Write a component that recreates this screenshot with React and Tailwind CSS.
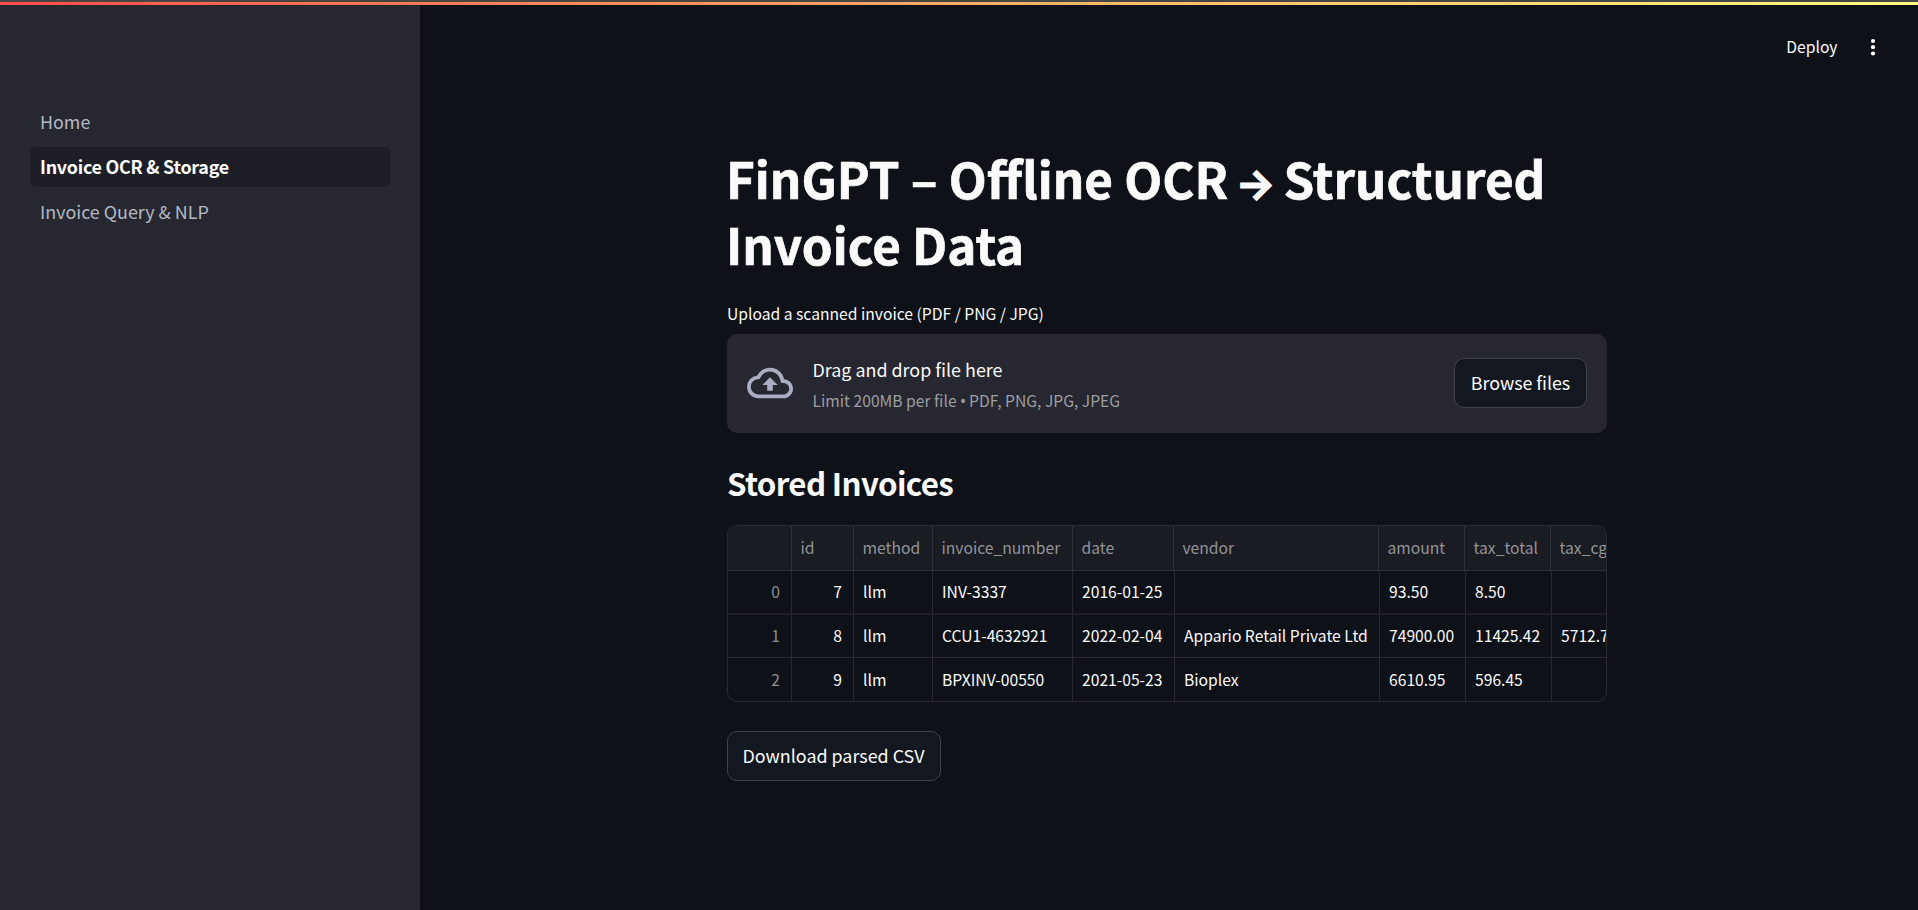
import React from "react";

const NAV = [
  { label: "Home", active: false },
  { label: "Invoice OCR & Storage", active: true },
  { label: "Invoice Query & NLP", active: false },
];

const COLUMNS = [
  { label: "", head: "w-16", body: "w-16 justify-end pr-[11px] text-[#8b8c90]" },
  { label: "id", head: "w-[62px]", body: "w-[62px] justify-end pr-[11px]" },
  { label: "method", head: "w-[79px]", body: "w-[79px]" },
  { label: "invoice_number", head: "w-[140px]", body: "w-[140px]" },
  { label: "date", head: "w-[101px]", body: "w-[102px]" },
  { label: "vendor", head: "w-[205px]", body: "w-[205px]" },
  { label: "amount", head: "w-[86px]", body: "w-[86px]" },
  { label: "tax_total", head: "w-[86px]", body: "w-[86px]" },
  { label: "tax_cgst", head: "w-[86px]", body: "w-[86px]" },
];

const ROWS = [
  { height: "h-11 border-b-2 border-[#1d1f25]", cells: ["0", "7", "llm", "INV-3337", "2016-01-25", "", "93.50", "8.50", ""] },
  { height: "h-[43px] border-b border-[#292b31]", cells: ["1", "8", "llm", "CCU1-4632921", "2022-02-04", "Appario Retail Private Ltd", "74900.00", "11425.42", "5712.71"] },
  { height: "h-[43px] leading-[42px]", cells: ["2", "9", "llm", "BPXINV-00550", "2021-05-23", "Bioplex", "6610.95", "596.45", ""] },
];

function Sidebar() {
  return (
    <nav className="flex w-[420px] shrink-0 flex-col gap-[5px] bg-[#262730] px-[30px] pt-[97px]">
      {NAV.map(({ label, active }) => (
        <a
          key={label}
          className={
            active
              ? "flex h-10 items-start rounded-[5px] bg-[#1e1e26] px-2.5 text-[17.9px] leading-[38px] font-bold tracking-[-0.25px] text-white"
              : "flex h-10 items-start rounded-[5px] px-2.5 text-[17.9px] leading-[38px] text-[#b2b9c6]"
          }
        >
          {label}
        </a>
      ))}
    </nav>
  );
}

function Toolbar() {
  return (
    <header className="flex h-[84px] items-center justify-end pr-[35.5px]">
      <span className="text-[15.67px] leading-6">Deploy</span>
      <svg className="ml-[25px] h-5 w-5" viewBox="0 0 20 20" fill="currentColor">
        <circle cx="10" cy="4" r="2.1" />
        <circle cx="10" cy="10.2" r="2.1" />
        <circle cx="10" cy="16.5" r="2.1" />
      </svg>
    </header>
  );
}

function Uploader() {
  return (
    <section className="mt-[6px] flex h-[99px] items-center rounded-[10px] bg-[#262730] px-5">
      <svg className="mb-0.5 h-[46px] w-[46px] text-[#a9aec2]" viewBox="0 0 24 24" fill="currentColor">
        <path d="M19.35 10.04A7.49 7.49 0 0 0 12 4C9.11 4 6.6 5.64 5.35 8.04A5.994 5.994 0 0 0 0 14c0 3.31 2.69 6 6 6h13c2.76 0 5-2.24 5-5 0-2.64-2.05-4.78-4.65-4.96zM19 18H6c-2.21 0-4-1.79-4-4 0-2.05 1.53-3.76 3.56-3.97l1.07-.11.5-.95A5.469 5.469 0 0 1 12 6c2.62 0 4.88 1.86 5.39 4.43l.3 1.5 1.53.11A2.98 2.98 0 0 1 22 15c0 1.65-1.35 3-3 3zM8 13h2.55v3h2.9v-3H16l-4-4z" />
      </svg>
      <div className="ml-[19.5px] flex grow flex-col pt-0.5">
        <span className="text-[17.9px] leading-8">Drag and drop file here</span>
        <span className="text-[15.67px] leading-[31px] text-[#9d9ea2]">
          Limit 200MB per file <span className="inline-block w-[5.5px] font-['Noto_Sans'] text-[16px] leading-none">•</span> PDF, PNG, JPG, JPEG
        </span>
      </div>
      <button className="mb-px flex h-[50px] w-[133px] justify-center rounded-[10px] border border-[#41434b] bg-[#131720] text-[17.9px] leading-[46px] tracking-[-0.05px]">
        Browse files
      </button>
    </section>
  );
}

function InvoiceTable() {
  return (
    <div className="mt-[21px] flex h-[177px] flex-col overflow-hidden rounded-[10px] border border-[#292b31] text-[15.67px]">
      <div className="flex h-[45px] shrink-0 border-b border-[#2f3138] bg-[#1a1c24] text-[#929397]">
        {COLUMNS.map(({ label, head }, i) => (
          <div key={i} className={`${head} flex shrink-0 items-center border-r border-[#2f3138] pl-[8.5px]`}>
            {label}
          </div>
        ))}
      </div>
      {ROWS.map(({ height, cells }) => (
        <div key={cells[0]} className={`${height} flex shrink-0`}>
          {cells.map((cell, i) => (
            <div key={i} className={`${COLUMNS[i].body} flex shrink-0 items-center border-r border-[#292b31] pl-[9px] whitespace-nowrap`}>
              {cell}
            </div>
          ))}
        </div>
      ))}
    </div>
  );
}

export default function App() {
  return (
    <div className="flex h-[910px] w-[1918px] flex-col overflow-hidden bg-[#0e1117] font-['Noto_Sans_CJK_SC','Noto_Sans',sans-serif] text-[#fafafa]">
      <div className="h-0.5 shrink-0 bg-[#454545]" />
      <div className="h-[3px] shrink-0 bg-linear-to-r from-[#ff4b4b] to-[#fffd80]" />
      <div className="flex grow">
        <Sidebar />
        <main className="grow">
          <Toolbar />
          <div className="mx-[307px] w-[880px] pt-[56px]">
            <h1 className="-ml-px text-[49.3px] leading-[66px] font-bold whitespace-nowrap [-webkit-text-stroke:0.7px]">
              FinGPT – Offline OCR
              <span className="ml-[7.5px] inline-block w-[48px] font-['Inter'] text-[42px] leading-none [-webkit-text-stroke:1.2px]">→</span>
              Structured
              <br />
              Invoice Data
            </h1>
            <div className="mt-[22px] text-[15.67px] leading-[29px]">Upload a scanned invoice (PDF / PNG / JPG)</div>
            <Uploader />
            <h2 className="mt-[28px] text-[31.3px] leading-[43px] font-bold tracking-[-0.66px]">Stored Invoices</h2>
            <InvoiceTable />
            <button className="mt-[29px] flex h-[50px] w-[214px] justify-center rounded-[10px] border border-[#41434b] bg-[#131720] pr-px text-[17.9px] leading-[46px]">
              Download parsed CSV
            </button>
          </div>
        </main>
      </div>
    </div>
  );
}
